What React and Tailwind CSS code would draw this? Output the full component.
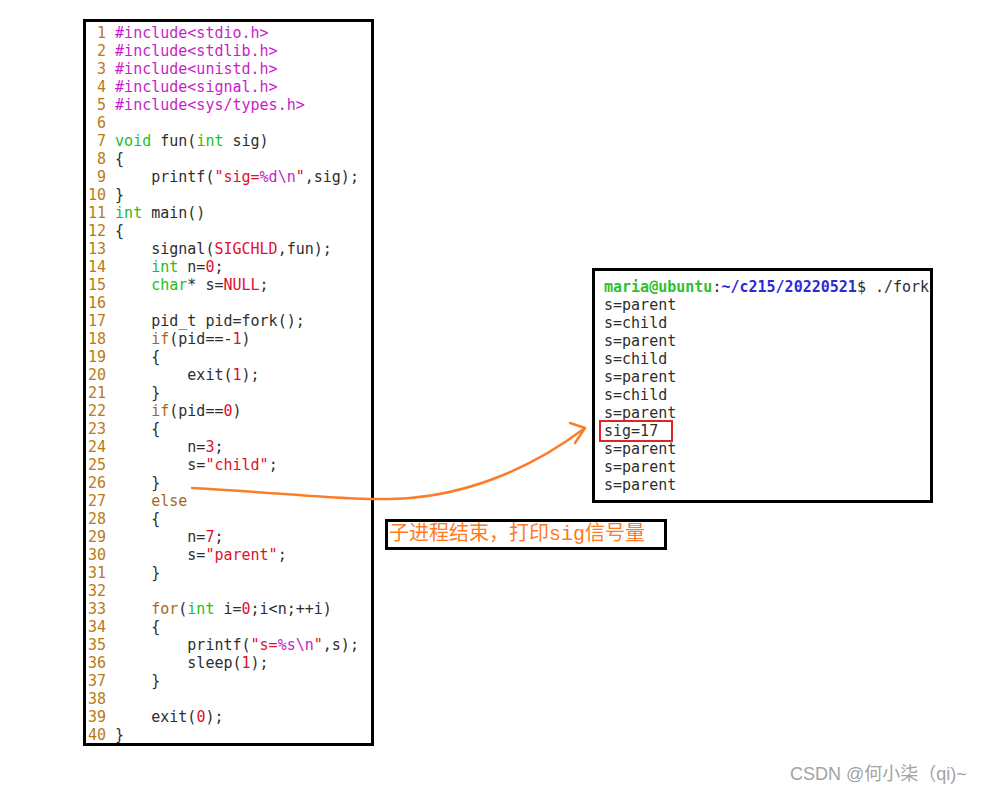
const P = 'text-[#c81ec8]'
const T = 'text-[#22c022]'
const K = 'text-[#a9681c]'
const R = 'text-[#e0102f]'

// each line: list of [text, className]
const code = [
  [['#include<stdio.h>', P]],
  [['#include<stdlib.h>', P]],
  [['#include<unistd.h>', P]],
  [['#include<signal.h>', P]],
  [['#include<sys/types.h>', P]],
  [],
  [['void', T], [' fun('], ['int', T], [' sig)']],
  [['{']],
  [['    printf('], ['"sig=', R], ['%d\\n', P], ['"', R], [',sig);']],
  [['}']],
  [['int', T], [' main()']],
  [['{']],
  [['    signal('], ['SIGCHLD', R], [',fun);']],
  [['    '], ['int', T], [' n='], ['0', R], [';']],
  [['    '], ['char', T], ['* s='], ['NULL', R], [';']],
  [],
  [['    pid_t pid=fork();']],
  [['    '], ['if', K], ['(pid==-'], ['1', R], [')']],
  [['    {']],
  [['        exit('], ['1', R], [');']],
  [['    }']],
  [['    '], ['if', K], ['(pid=='], ['0', R], [')']],
  [['    {']],
  [['        n='], ['3', R], [';']],
  [['        s='], ['"child"', R], [';']],
  [['    }']],
  [['    '], ['else', K]],
  [['    {']],
  [['        n='], ['7', R], [';']],
  [['        s='], ['"parent"', R], [';']],
  [['    }']],
  [],
  [['    '], ['for', K], ['('], ['int', T], [' i='], ['0', R], [';i<n;++i)']],
  [['    {']],
  [['        printf('], ['"s=', R], ['%s\\n', P], ['"', R], [',s);']],
  [['        sleep('], ['1', R], [');']],
  [['    }']],
  [],
  [['    exit('], ['0', R], [');']],
  [['}']],
]

const output = ['s=parent', 's=child', 's=parent', 's=child', 's=parent', 's=child', 's=parent', 'sig=17', 's=parent', 's=parent', 's=parent']

export default function App() {
  return (
    <div className="relative w-[994px] h-[794px] bg-white overflow-hidden flex items-start font-['DejaVu_Sans_Mono',monospace] text-[15px]">
      {/* source file */}
      <div className="ml-[83px] mt-[19px] w-[291px] h-[727px] border-[3px] border-black pt-[2px] pl-[2px] shrink-0">
        {code.map((line, i) => (
          <div key={i} className="flex h-[18px] leading-[18px] whitespace-pre text-[#2e2e2e]">
            <span className="text-[#b97a16]">{String(i + 1).padStart(2, ' ') + ' '}</span>
            <span>
              {line.map(([t, c], j) => (
                <span key={j} className={c}>{t}</span>
              ))}
            </span>
          </div>
        ))}
      </div>

      {/* terminal + note */}
      <div className="ml-[11px] pt-[268px] flex flex-col items-start shrink-0">
        <div className="ml-[207px] w-[341px] h-[235px] border-[3px] border-black pt-[7px] pl-[9px] overflow-hidden">
          <div className="h-[18px] leading-[18px] whitespace-pre text-[#2e2e2e]">
            <span className="font-bold text-[#2fc02f]">maria@ubuntu</span>
            <span>:</span>
            <span className="font-bold text-[#2b2bd6]">~/c215/20220521</span>
            <span>$ ./fork</span>
          </div>
          {output.map((l, i) => (
            <div key={i} className="h-[18px] leading-[18px] whitespace-pre text-[#2e2e2e]">
              {l === 'sig=17' ? (
                <span className="relative inline-block">
                  {l}
                  <span className="absolute left-[-5px] top-[-2px] w-[74px] h-[22px] border-2 border-[#e02424]" />
                </span>
              ) : l}
            </div>
          ))}
        </div>
        <div className="mt-[16px] w-[282px] h-[31px] border-[3px] border-black flex items-center pl-[1px] text-[20px] leading-[24px] text-[#ff7a22] font-['Liberation_Mono','Noto_Sans_CJK_SC',serif]">
          子进程结束，打印sig信号量
        </div>
      </div>

      {/* arrow */}
      <svg className="absolute inset-0 pointer-events-none" width="994" height="794" viewBox="0 0 994 794">
        <path
          d="M192 488 C 300 494, 360 502, 410 498 C 480 492, 540 462, 585 428"
          fill="none"
          stroke="#fa7d2a"
          strokeWidth="2.5"
          strokeLinecap="round"
        />
        <path d="M570 423 L585 428 L575 443" fill="none" stroke="#fa7d2a" strokeWidth="2.5" strokeLinecap="round" strokeLinejoin="round" />
      </svg>

      <div className="absolute left-[790px] top-[762px] text-[18px] leading-[24px] text-[#a3a3a3] font-['Liberation_Sans','Noto_Sans_CJK_SC',sans-serif]">
        CSDN @何小柒（qi)~
      </div>
    </div>
  )
}
